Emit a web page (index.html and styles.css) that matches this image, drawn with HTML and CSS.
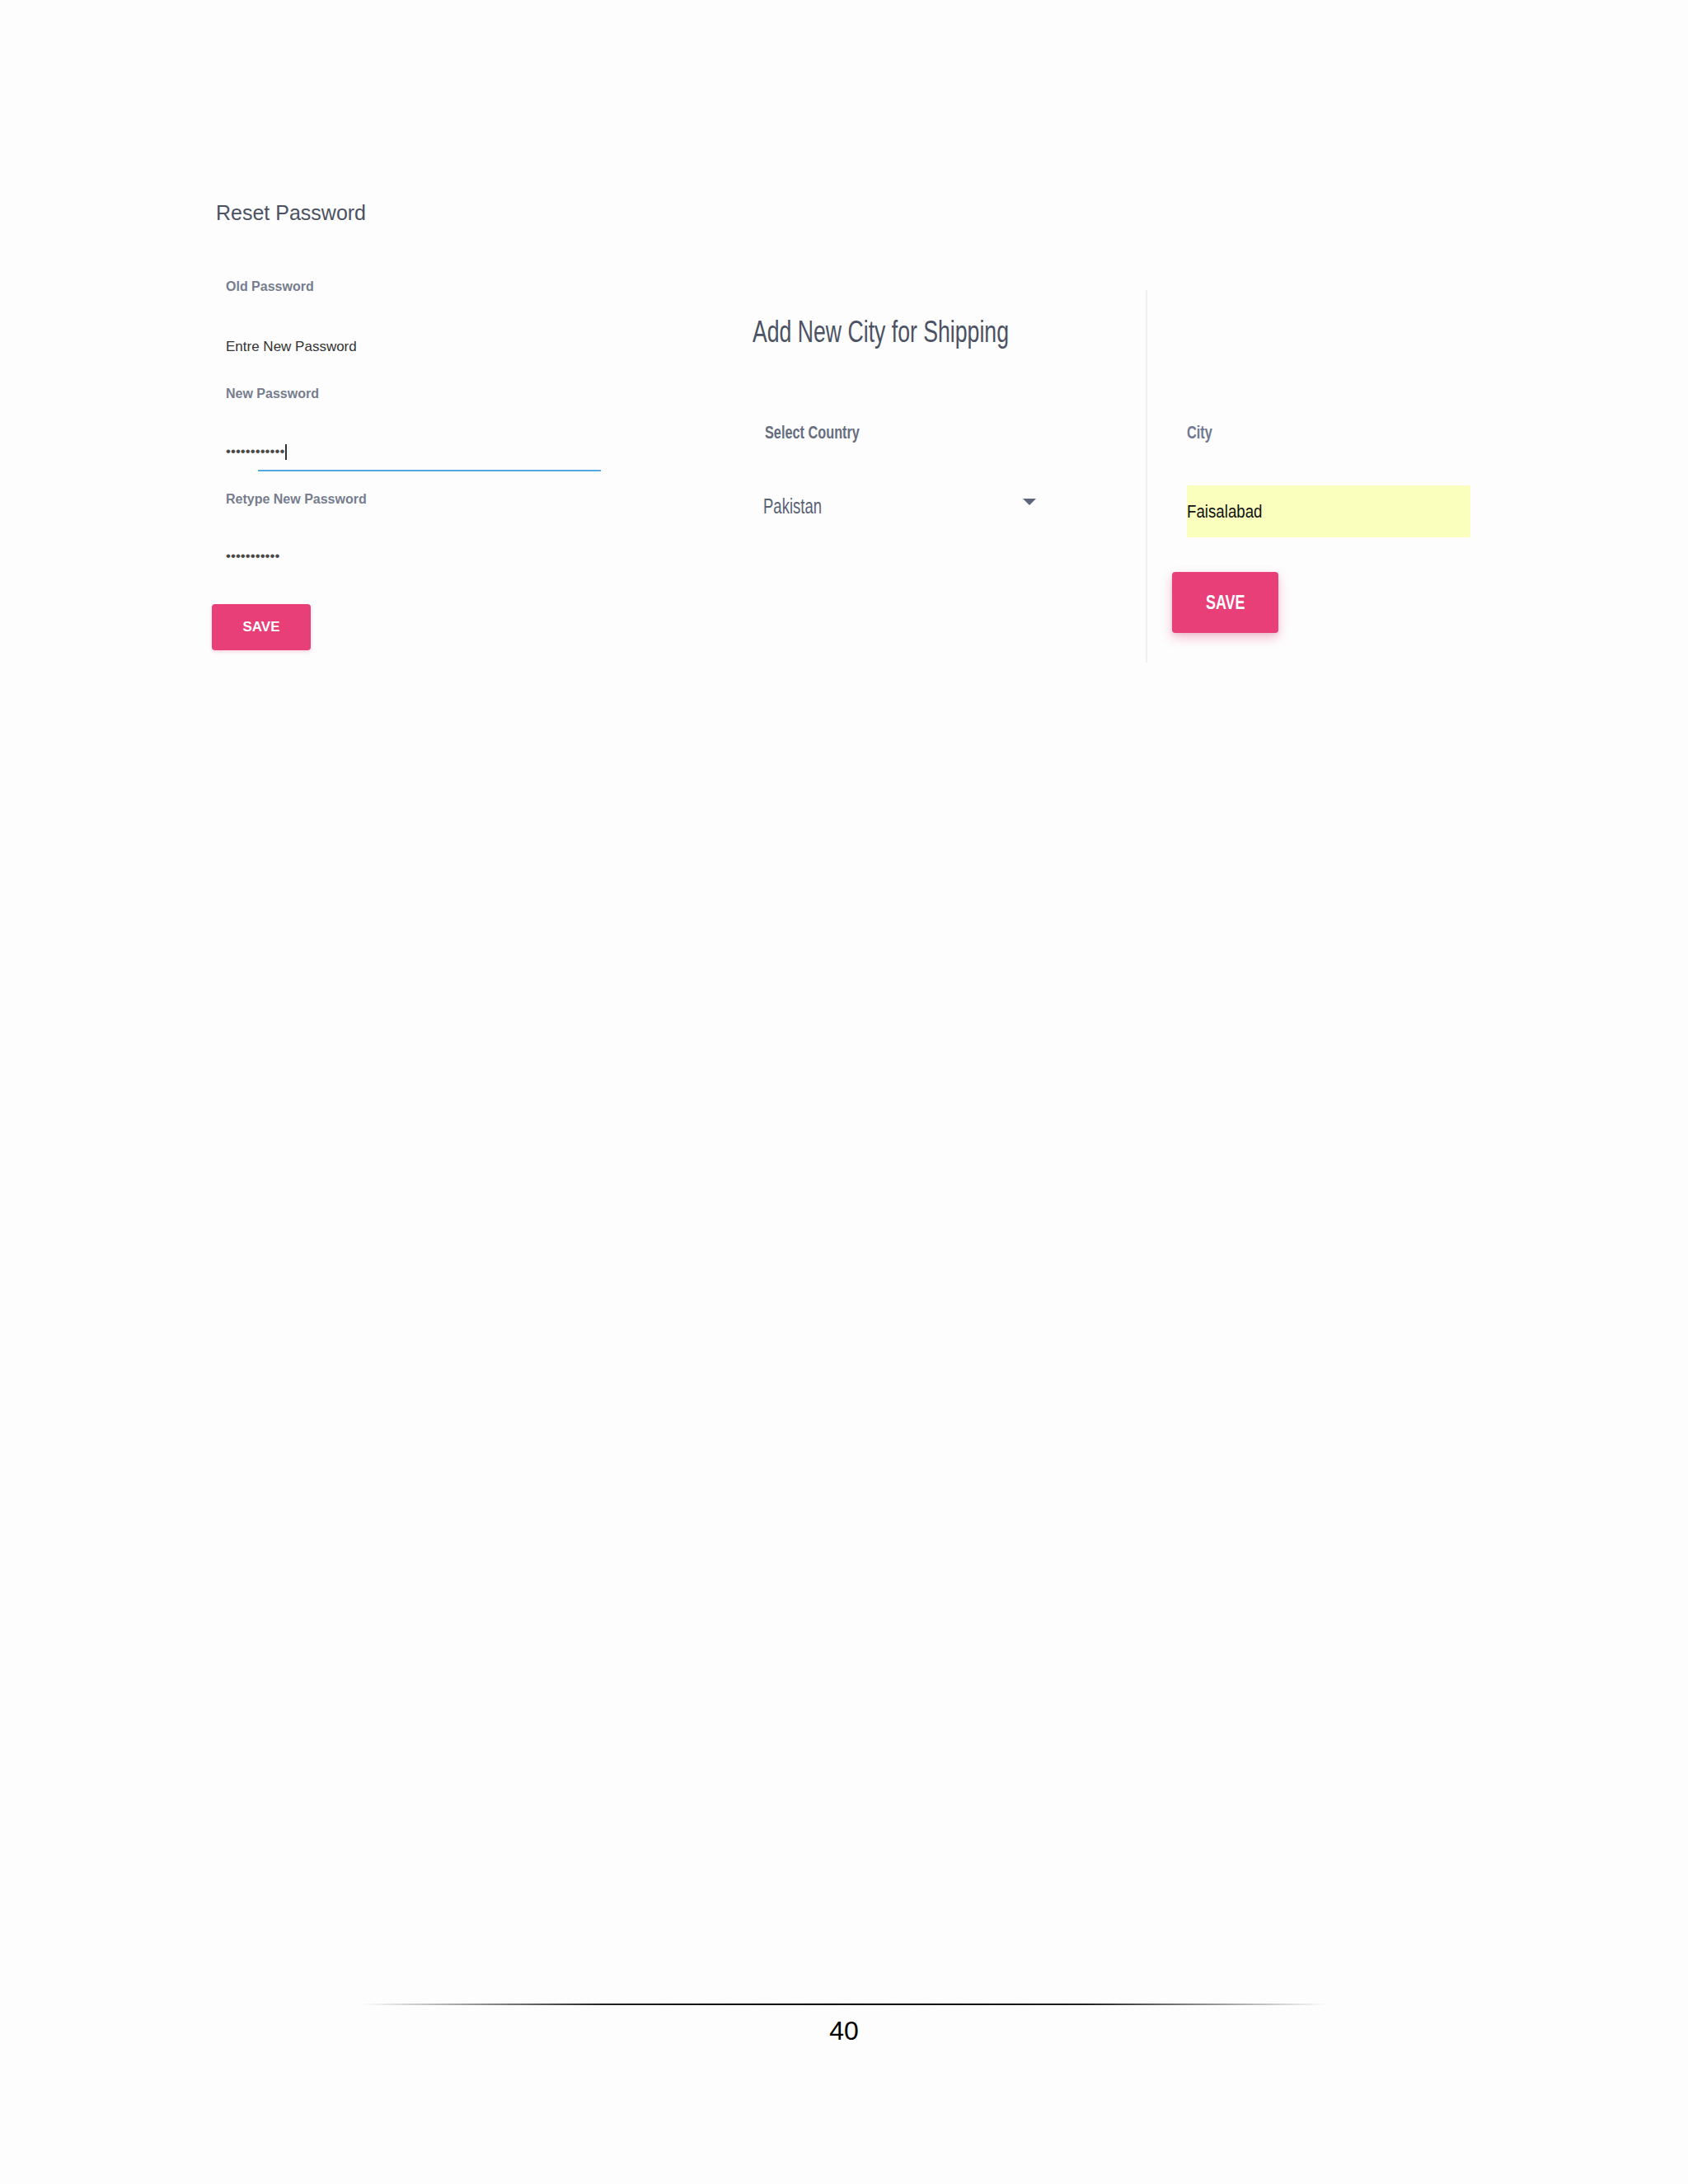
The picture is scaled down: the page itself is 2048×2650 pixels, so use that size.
FILE: index.html
```html
<!DOCTYPE html>
<html>
<head>
  <title>Reset Password / Add City</title>
  <link rel="stylesheet" href="styles.css">
</head>
<body>
  <div class="page">

    <div class="shots">
      <!-- reset password form -->
      <div class="reset">
        <h2 class="reset-title">Reset Password</h2>
        <div class="field-label label-old">Old Password</div>
        <div class="field-value">Entre New Password</div>
        <div class="field-label label-new">New Password</div>
        <div class="field-dots dots-new">••••••••••••<span class="caret"></span></div>
        <div class="focus-line"></div>
        <div class="field-label label-retype">Retype New Password</div>
        <div class="field-dots dots-retype">•••••••••••</div>
        <button class="save-btn">SAVE</button>
      </div>

      <!-- add city form -->
      <div class="city">
        <div class="city-main">
          <h2 class="city-title"><span class="narrow">Add New City for Shipping</span></h2>
          <div class="city-label label-country"><span class="narrow">Select Country</span></div>
          <div class="country-select">
            <span class="narrow country-value">Pakistan</span>
            <span class="select-arrow"></span>
          </div>
        </div>
        <div class="city-side">
          <div class="city-label label-city"><span class="narrow">City</span></div>
          <div class="city-input"><span class="narrow city-text">Faisalabad</span></div>
          <button class="save-btn save-big"><span class="narrow-center">SAVE</span></button>
        </div>
      </div>
    </div>

    <div class="footer">
      <div class="footer-line"></div>
      <div class="page-num">40</div>
    </div>

  </div>
</body>
</html>
```

FILE: styles.css
```css
/* page looks like a printed report page with two screenshots on it */
body {
  margin: 0;
  background-color: #fdfdfd;
  font-family: "Liberation Sans", Arial, sans-serif;
}

.page {
  min-height: 2650px;
  display: flex;
  flex-direction: column;
}

.shots {
  display: flex;
  align-items: flex-start;
  margin-top: 243px;
  padding-left: 257px;
}

/* text in the second screenshot is squeezed sideways */
.narrow {
  display: inline-block;
  white-space: nowrap;
  transform: scaleX(0.74);
  transform-origin: left center;
}

.narrow-center {
  display: inline-block;
  transform: scaleX(0.75);
}

/* ---------- reset password ---------- */
.reset {
  width: 656px;
  flex-shrink: 0;
  display: flex;
  flex-direction: column;
  align-items: flex-start;
}

.reset-title {
  margin: 0 0 0 5px;
  font-size: 25px;
  line-height: 30px;
  font-weight: normal;
  color: #4b5263;
}

.field-label {
  margin-left: 17px;
  font-size: 16px;
  line-height: 20px;
  font-weight: bold;
  color: #767d8e;
}

.label-old {
  margin-top: 65px;
}

.label-new {
  margin-top: 37px;
}

.label-retype {
  margin-top: 24px;
}

.field-value {
  margin-top: 53px;
  margin-left: 17px;
  font-size: 17px;
  line-height: 20px;
  color: #333333;
}

.field-dots {
  margin-left: 17px;
  font-size: 17px;
  line-height: 24px;
  color: #4a4a4a;
  letter-spacing: 0;
}

.dots-new {
  margin-top: 48px;
}

.dots-retype {
  margin-top: 47px;
}

.caret {
  display: inline-block;
  width: 2px;
  height: 19px;
  margin-left: 1px;
  background-color: #333333;
  vertical-align: middle;
}

.focus-line {
  margin-top: 10px;
  margin-left: 56px;
  width: 416px;
  height: 2px;
  background-color: #55a6e0;
}

.save-btn {
  margin-top: 46px;
  width: 120px;
  height: 56px;
  padding: 0;
  border: none;
  border-radius: 4px;
  background-color: #e83f79;
  color: #ffffff;
  font-family: "Liberation Sans", Arial, sans-serif;
  font-size: 17px;
  font-weight: bold;
  box-shadow: 0 2px 4px rgba(232, 63, 121, 0.2);
  cursor: pointer;
}

/* ---------- add new city ---------- */
.city {
  display: flex;
  flex-shrink: 0;
  margin-top: 109px;
  height: 452px;
}

.city-main {
  width: 477px;
  padding-top: 29px;
  border-right: 2px solid #f0f0f3;
}

.city-title {
  margin: 0;
  font-size: 36px;
  line-height: 44px;
  font-weight: normal;
  color: #4b5263;
}

.city-label {
  font-size: 22px;
  line-height: 28px;
  font-weight: bold;
  color: #666e80;
}

.label-country {
  margin-top: 86px;
  margin-left: 15px;
}

.country-select {
  display: flex;
  justify-content: space-between;
  align-items: flex-start;
  width: 331px;
  margin-top: 60px;
  margin-left: 13px;
}

.country-value {
  font-size: 25px;
  line-height: 30px;
  color: #5a6173;
}

.select-arrow {
  width: 0;
  height: 0;
  margin-top: 6px;
  border-left: 8px solid transparent;
  border-right: 8px solid transparent;
  border-top: 8px solid #5c6579;
}

.city-side {
  width: 560px;
  padding-left: 48px;
  padding-top: 159px;
}

.label-city {
  color: #6f7990;
}

.city-input {
  margin-top: 50px;
  width: 344px;
  height: 63px;
  line-height: 63px;
  background-color: #faffbd;
}

.city-text {
  font-size: 22px;
  color: #111111;
  transform: scaleX(0.85);
}

.save-big {
  margin-top: 42px;
  margin-left: -18px;
  width: 129px;
  height: 74px;
  font-size: 24px;
  box-shadow: 0 6px 14px rgba(232, 63, 121, 0.3), 0 2px 5px rgba(0, 0, 0, 0.08);
}

/* ---------- footer ---------- */
.footer {
  margin-top: auto;
  padding-bottom: 167px;
  display: flex;
  flex-direction: column;
  align-items: center;
}

.footer-line {
  width: 1172px;
  height: 2px;
  margin-left: 2px;
  background: linear-gradient(to right, rgba(0, 0, 0, 0), #222222 25%, #000000 50%, #222222 75%, rgba(0, 0, 0, 0));
}

.page-num {
  margin-top: 12px;
  font-size: 32px;
  line-height: 38px;
  color: #000000;
}
```
